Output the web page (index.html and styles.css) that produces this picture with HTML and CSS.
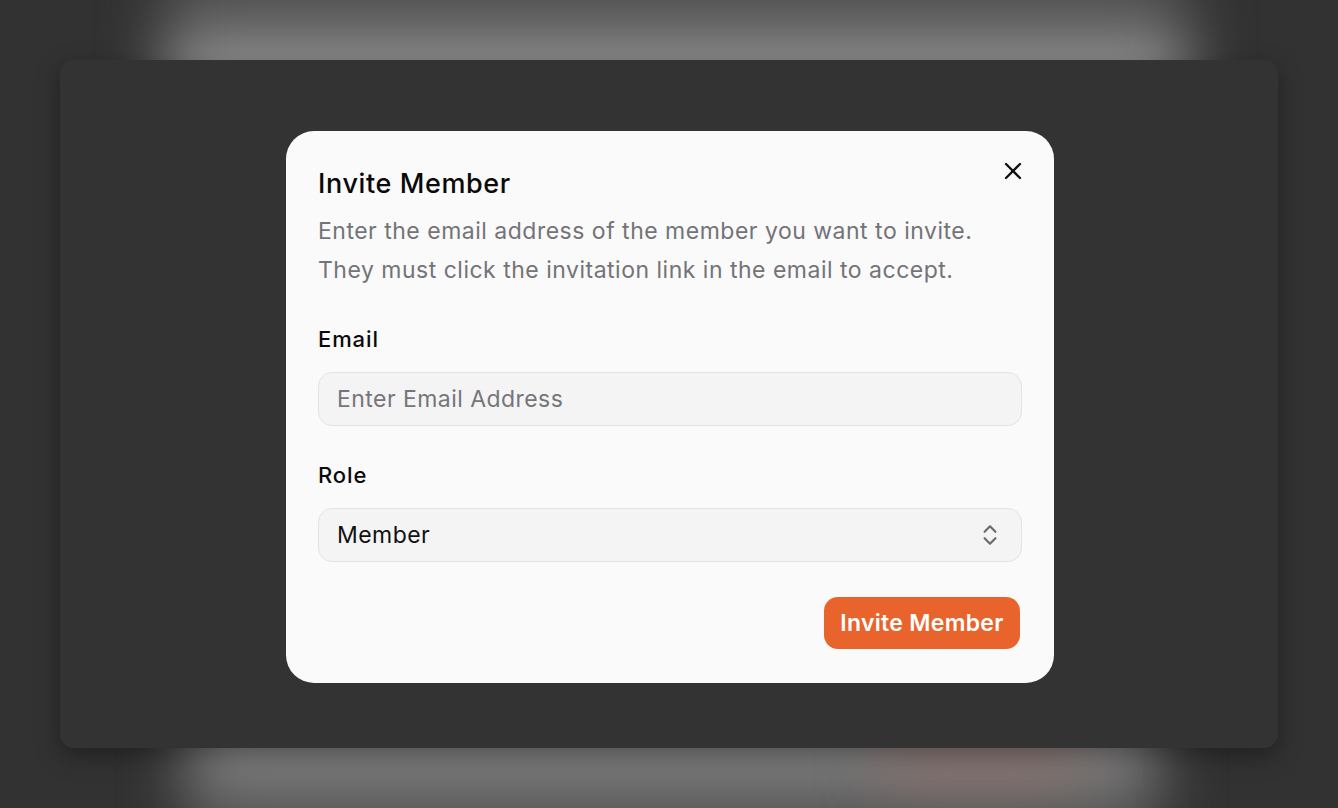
FILE: index.html
```html
<!DOCTYPE html>
<html lang="en">
<head>
<meta charset="utf-8">
<title>Invite Member</title>
<link rel="stylesheet" href="styles.css">
</head>
<body>
<div class="stage">
  <div class="glow glow-top"></div>
  <div class="glow glow-bottom"></div>
  <div class="glow glow-tint"></div>
  <div class="window">
    <div class="modal">
      <button class="close" aria-label="Close">
        <svg width="28" height="28" viewBox="0 0 24 24" fill="none" stroke="#111" stroke-width="2" stroke-linecap="round" stroke-linejoin="round"><path d="M18 6 6 18"/><path d="m6 6 12 12"/></svg>
      </button>
      <h2 class="title">Invite Member</h2>
      <p class="desc">Enter the email address of the member you want to invite.<br>They must click the invitation link in the email to accept.</p>
      <div class="field">
        <label class="label">Email</label>
        <div class="input placeholder">Enter Email Address</div>
      </div>
      <div class="field">
        <label class="label">Role</label>
        <div class="input select">
          <span>Member</span>
          <svg class="chev" width="26" height="26" viewBox="0 0 24 24" fill="none" stroke="#6b6b6b" stroke-width="2" stroke-linecap="round" stroke-linejoin="round"><path d="m7 15 5 5 5-5"/><path d="m7 9 5-5 5 5"/></svg>
        </div>
      </div>
      <div class="actions">
        <button class="primary">Invite Member</button>
      </div>
    </div>
  </div>
</div>
</body>
</html>
```
FILE: styles.css
```css
* { box-sizing: border-box; }
html, body { margin: 0; padding: 0; }
body {
  width: 1338px;
  height: 808px;
  overflow: hidden;
  background: #323232;
  font-family: Inter, "Noto Sans", "Liberation Sans", sans-serif;
}
.stage {
  position: relative;
  width: 1338px;
  height: 808px;
  padding: 60px;
  overflow: hidden;
}
.glow {
  position: absolute;
  filter: blur(30px);
}
.glow-top {
  left: 165px;
  right: 150px;
  top: -70px;
  height: 200px;
  background: linear-gradient(to bottom, #3a3a3a 0%, #5a5a5a 45%, #9a9a9a 70%, #9a9a9a 100%);
}
.glow-bottom {
  left: 185px;
  right: 180px;
  top: 690px;
  height: 200px;
  background: linear-gradient(to bottom, #8a8a8a 0%, #858585 30%, #555 65%, #3e3e3e 100%);
}
.glow-tint {
  left: 880px;
  width: 200px;
  top: 720px;
  height: 70px;
  background: rgba(150, 110, 105, 0.5);
  filter: blur(30px);
}
.window {
  position: relative;
  height: 688px;
  background: #333333;
  border-radius: 14px;
  box-shadow: 0 8px 24px rgba(0, 0, 0, 0.35);
  display: flex;
  align-items: flex-start;
  justify-content: center;
  padding-top: 71px;
}
.modal {
  position: relative;
  width: 768px;
  margin-left: 2px;
  background: #fafafa;
  border-radius: 28px;
  padding: 33px 32px 34px;
}
.close {
  position: absolute;
  top: 26px;
  right: 27px;
  width: 28px;
  height: 28px;
  padding: 0;
  border: 0;
  background: none;
  display: flex;
}
.title {
  margin: 0;
  font-size: 27px;
  line-height: 40px;
  font-weight: 500;
  color: #0a0a0a;
  letter-spacing: 0.6px;
}
.desc {
  margin: 8px 0 0;
  font-size: 23px;
  line-height: 39px;
  color: #737378;
  letter-spacing: 0.5px;
}
.field { margin-top: 34px; }
.label {
  display: block;
  font-size: 22px;
  line-height: 30px;
  font-weight: 500;
  color: #0a0a0a;
  letter-spacing: 0.9px;
}
.input {
  margin-top: 18px;
  height: 54px;
  border: 1.5px solid #e3e3e3;
  background: #f4f4f4;
  border-radius: 14px;
  padding: 0 18px;
  display: flex;
  align-items: center;
  font-size: 23px;
  color: #111;
  letter-spacing: 0.45px;
}
.placeholder { color: #75757a; }
.select { justify-content: space-between; padding-right: 21px; }
.chev { margin-right: -3px; }
.actions {
  margin-top: 35px;
  display: flex;
  justify-content: flex-end;
}
.primary {
  height: 52px;
  width: 196px;
  margin-right: 2px;
  border: 0;
  border-radius: 14px;
  background: #e9642c;
  color: #fff;
  font-family: inherit;
  font-size: 23px;
  font-weight: 600;
  letter-spacing: 0.3px;
  padding: 0;
}
```
